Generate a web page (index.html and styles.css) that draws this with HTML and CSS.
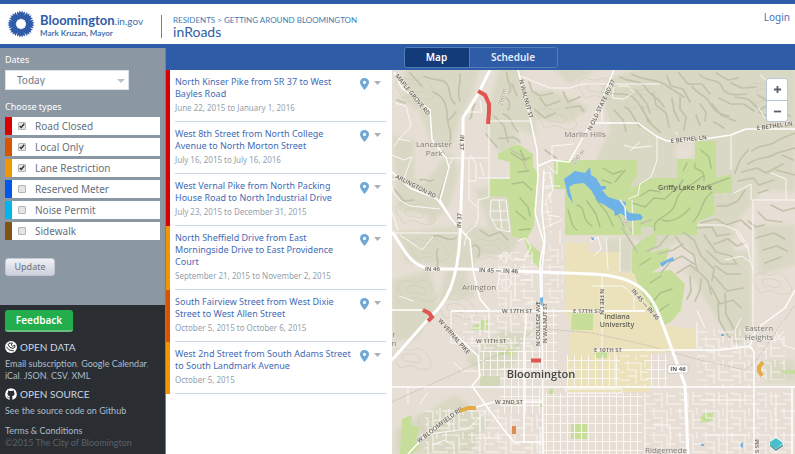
FILE: index.html
```html
<!DOCTYPE html>
<html lang="en">
<head>
<meta charset="utf-8">
<meta name="viewport" content="width=device-width, initial-scale=1">
<title>inRoads</title>
<link rel="stylesheet" href="styles.css">
</head>
<body>
<svg class="defs" aria-hidden="true">
  <symbol id="pin" viewBox="0 0 9 12"><path fill-rule="evenodd" d="M4.500 0C1.900 0 0 1.900 0 4.300C0 7.300 4.500 12 4.500 12S9 7.300 9 4.300C9 1.900 7.100 0 4.500 0ZM4.500 2.800A1.600 1.600 0 1 1 4.500 6A1.600 1.600 0 1 1 4.500 2.800Z"/></symbol>
</svg>
<header class="site-header">
  <a class="brand" href="#">
    <svg class="flower" viewBox="-14 -14 28 28" aria-hidden="true">
      <g id="arm"><path d="M0-4L-3-5.500L-4-9L-4.200-12.600L-2-11.300L-1.300-13.600L0-11.400L1.300-13.600L2-11.300L4.200-12.600L4-9L3-5.500Z"/></g>
      <use href="#arm" transform="rotate(45)"/><use href="#arm" transform="rotate(90)"/><use href="#arm" transform="rotate(135)"/><use href="#arm" transform="rotate(180)"/><use href="#arm" transform="rotate(225)"/><use href="#arm" transform="rotate(270)"/><use href="#arm" transform="rotate(315)"/>
      <path class="flower-core" d="M0-5.500L1.500-3.700L3.900-3.900L3.700-1.500L5.500 0L3.700 1.500L3.900 3.900L1.500 3.700L0 5.500L-1.500 3.700L-3.900 3.900L-3.700 1.500L-5.500 0L-3.700-1.500L-3.900-3.900L-1.500-3.700Z"/>
      <path class="flower-core" d="M3.600-8.600L6.200-14L4.400-14ZM8.600-3.600L14-6.200V-4.400ZM8.600 3.600L14 6.200V4.400ZM3.600 8.600L6.200 14H4.400ZM-3.600 8.600L-6.200 14H-4.400ZM-8.600 3.600L-14 6.200V4.400ZM-8.600-3.600L-14-6.200V-4.400ZM-3.600-8.600L-6.200-14H-4.400Z"/>
    </svg>
    <span class="brand-text"><span class="brand-name"><b>Bloomington</b>.in.gov</span><span class="mayor">Mark Kruzan, Mayor</span></span>
  </a>
  <div class="heading">
    <nav class="crumbs"><a href="#">RESIDENTS</a> &gt; <a href="#">GETTING AROUND BLOOMINGTON</a></nav>
    <h1>inRoads</h1>
  </div>
  <a class="login" href="#">Login</a>
</header>
<main class="app">
  <aside class="sidebar">
    <form class="filters">
      <label class="field-title" for="dates">Dates</label>
      <div class="select-wrap"><select id="dates"><option>Today</option><option>Tomorrow</option></select></div>
      <fieldset>
        <legend class="field-title">Choose types</legend>
        <label class="type closed"><input type="checkbox" checked>Road Closed</label>
        <label class="type local"><input type="checkbox" checked>Local Only</label>
        <label class="type lane"><input type="checkbox" checked>Lane Restriction</label>
        <label class="type meter"><input type="checkbox">Reserved Meter</label>
        <label class="type noise"><input type="checkbox">Noise Permit</label>
        <label class="type walk"><input type="checkbox">Sidewalk</label>
      </fieldset>
      <button class="update" type="submit">Update</button>
    </form>
    <footer class="side-footer">
      <button class="feedback" type="button">Feedback</button>
      <h2><svg viewBox="0 0 12 12" aria-hidden="true"><circle class="disc" cx="6" cy="6" r="6"/><path class="cut" d="M1 5.500L4 8.800L8.800 10M3 3.500L5 6.400L8 7.400L9.800 6.400V4L7.800 5.300L6.300 4L7.400 2.200L5 2Z"/></svg>OPEN DATA</h2>
      <p class="links"><a href="#">Email subscription</a>, <a href="#">Google Calendar</a>, <a href="#">iCal</a>, <a href="#">JSON</a>, <a href="#">CSV</a>, <a href="#">XML</a></p>
      <h2><svg viewBox="0 0 12 12" aria-hidden="true"><path class="disc" d="M6 .2a6 6 0 0 0-1.900 11.600c.3 0 .5-.1.500-.4V10C3 10.300 2.600 9.400 2.400 9c-.1-.3-.5-.7-.8-.9.5-.1 1 .3 1.300.8.500.7 1.200.6 1.800.3 0-.4.200-.7.400-.8C3.600 8.200 2.500 7.600 2.500 5.600c0-.7.200-1.200.6-1.600-.1-.4-.2-.9.100-1.600.6-.1 1.200.2 1.700.6a6 6 0 0 1 2.200 0c.5-.4 1.100-.7 1.700-.6.300.7.200 1.200.1 1.600.4.400.6.900.6 1.600 0 2-1.100 2.600-2.600 2.800.300.300.500.600.500 1.200v1.800c0 .3.200.4.500.4A6 6 0 0 0 6 .2Z"/></svg>OPEN SOURCE</h2>
      <p class="links"><a href="#">See the source code on Github</a></p>
      <p class="legal"><a href="#">Terms &amp; Conditions</a><br><small>©2015 The City of Bloomington</small></p>
    </footer>
  </aside>
  <section class="content">
    <div class="toolbar"><div class="tabs"><button class="tab active" type="button">Map</button><button class="tab" type="button">Schedule</button></div></div>
    <div class="panes">
      <ul class="events">
        <li class="event closed"><div class="row"><div class="info"><a href="#">North Kinser Pike from SR 37 to West Bayles Road</a><time>June 22, 2015 to January 1, 2016</time></div><svg class="pin"><use href="#pin"/></svg><button class="more" type="button" aria-label="More"></button></div></li>
        <li class="event closed"><div class="row"><div class="info"><a href="#">West 8th Street from North College Avenue to North Morton Street</a><time>July 16, 2015 to July 16, 2016</time></div><svg class="pin"><use href="#pin"/></svg><button class="more" type="button" aria-label="More"></button></div></li>
        <li class="event closed"><div class="row"><div class="info"><a href="#">West Vernal Pike from North Packing House Road to North Industrial Drive</a><time>July 23, 2015 to December 31, 2015</time></div><svg class="pin"><use href="#pin"/></svg><button class="more" type="button" aria-label="More"></button></div></li>
        <li class="event lane"><div class="row"><div class="info"><a href="#">North Sheffield Drive from East Morningside Drive to East Providence Court</a><time>September 21, 2015 to November 2, 2015</time></div><svg class="pin"><use href="#pin"/></svg><button class="more" type="button" aria-label="More"></button></div></li>
        <li class="event local"><div class="row"><div class="info"><a href="#">South Fairview Street from West Dixie Street to West Allen Street</a><time>October 5, 2015 to October 6, 2015</time></div><svg class="pin"><use href="#pin"/></svg><button class="more" type="button" aria-label="More"></button></div></li>
        <li class="event lane"><div class="row"><div class="info"><a href="#">West 2nd Street from South Adams Street to South Landmark Avenue</a><time>October 5, 2015</time></div><svg class="pin"><use href="#pin"/></svg><button class="more" type="button" aria-label="More"></button></div></li>
      </ul>
      <div class="map">
        <svg class="map-art" viewBox="392 70 403 384" preserveAspectRatio="xMidYMid slice" role="img" aria-label="Map of Bloomington">
          <defs>
            <pattern id="blocks" width="7" height="9" patternUnits="userSpaceOnUse"><path d="M0 .5H7M.5 0V9" stroke="#faf7f3" stroke-width="1" fill="none"/></pattern>
            <pattern id="wide" width="26" height="24" patternUnits="userSpaceOnUse"><path d="M0 3H17V12H26M4 0V10H12V24M17 12V20H26M21 0V7M4 16H12M0 20H6" stroke="#f8f4f0" stroke-width="1" fill="none"/></pattern>
            <filter id="soften" x="-10%" y="-10%" width="120%" height="120%"><feGaussianBlur stdDeviation="2"/></filter>
            <filter id="haze" x="-5%" y="-5%" width="110%" height="110%"><feGaussianBlur stdDeviation=".5"/></filter>
            <g id="contour" fill="none" stroke="#cccbb5" stroke-width=".7"><path d="M0 5C8 0 12 8 20 4S32 10 36 17S28 27 20 22S6 28 3 20S-5 12 0 5M7 10C12 8 20 8 24 12S25 19 18 17S8 19 7 10"/></g>
          </defs>
          <path fill="#e7dfd5" d="M392 70H795V454H392Z"/>
          <g fill="#d9d8c4" filter="url(#soften)">
            <path d="M405 68H480L472 95L460 118L450 150L432 145L420 112L402 100ZM392 135L414 140L415 180L438 190L430 215L398 210ZM418 192L450 150L459 170L450 205L430 225ZM500 68H520L536 130L522 165L498 152L486 130L492 95ZM475 190L515 180L530 225L512 245L490 230ZM552 68H600L570 84ZM600 82L640 68H795V192L762 190L732 228L750 250L752 330L738 345L716 318L690 275L652 250L630 235L592 168L610 130Z"/>
            <path d="M398 232L460 226L463 268L405 262ZM470 226L524 232L512 252L480 256L466 275L475 297L438 300L446 270ZM392 280L430 270L438 310L415 340H392ZM500 330L530 330L512 368L485 377L465 360ZM395 430L455 395L490 420L470 454H395ZM606 240L632 236V272H606ZM765 360H795V382H766ZM755 225H795V265L760 275ZM520 92L552 90L590 108L570 122L535 120Z"/>
          </g>
          <g fill="#e7dfd5" filter="url(#soften)"><path d="M516 126L540 140L548 154L530 157L518 148ZM680 240L662 250L655 262L680 272L700 262ZM730 238L752 232V250L735 252ZM671 300L690 282L697 322L670 320ZM592 70L612 76L600 90L592 90ZM675 144L694 142V158L676 160Z"/></g>
          <g fill="#c7de9b">
            <path d="M498 154L512 146L520 145L533 154V166L538 174L534 226L526 240L540 252V268L531 260L524 239L512 236L508 197L489 196V179H510V162L498 159ZM554 160H637V178H634L630 189L640 184L651 178H677V159H695V141H716V178L732 174V193H714L715 214L697 222V235H655L652 227H641V235H565V189H554Z"/>
            <path d="M645 238L655 233L657 243L651 253L670 247L665 263L651 273L671 270L685 284L681 310L671 322L662 326L650 305L632 291V248Z"/>
            <path d="M473 325L480 324L482 320H488V330H471ZM498 353L513 346V355H498ZM402 419L412 415L411 425L420 427L416 440L419 448L412 454H400ZM571 424H587V439H571ZM549 389H553V394H549ZM572 313H593V330H571ZM585 351H605V356H585ZM700 418L704 413H713V420L708 422H700ZM780 370L795 370V374L784 373ZM514 400H518V405H514ZM539 404H543V407H539Z"/>
          </g>
          <path fill="#d1d7b7" d="M480 376H500V386H480Z"/>
          <path fill="#ebe2bb" d="M565 243H590V252H620V273H634L640 290L662 325L696 329V348L650 354V392H567V377L571 330L565 308Z"/>
          <path fill="#c7de9b" d="M572 313H593V330H571ZM596 352H607V358H596Z"/>
          <g fill="none" stroke="#c2c2aa" stroke-width="1.700" stroke-linecap="round" stroke-linejoin="round" filter="url(#haze)">
            <path d="M507 72C505 80 514 86 509 93M502 96C510 98 511 104 508 110M503 114C513 117 510 124 518 132M494 116L504 126L508 142M499 138C508 140 513 133 520 142M486 134L497 147M512 84L517 96M511 150L522 156L526 169M424 76C434 82 445 77 448 86S449 99 455 104M433 92C441 95 447 102 447 115S453 130 450 142M460 74C461 87 456 91 460 101M449 120L456 112M443 151L449 166L445 180L438 200M410 73L422 86M420 180C424 177 430 184 433 180M475 104C470 110 474 114 470 119M529 82L532 91L540 96L553 93M540 98L546 106L560 101M563 92L568 102L580 97M566 108L580 106L584 112M535 110L545 118L555 113M545 150L556 158M397 100L405 103M395 190L404 201L414 200M434 236C443 233 445 243 456 238M438 249C434 254 440 260 437 266M480 230L489 236L500 232L508 240M472 246C478 243 482 250 478 257"/>
            <path d="M620 77C629 83 641 79 646 88S660 98 664 107M632 74C644 82 658 77 670 88L684 97M610 93C620 96 629 91 636 100S645 116 650 121M625 107C634 111 633 120 640 127M614 110L623 120L626 131M636 90L647 104L650 113M653 93L656 105L666 113L669 127M642 107L648 121L660 132M667 76L671 86L683 89L690 102M679 73L688 84L702 84L710 94M680 97L680 109L686 117L684 130M672 98L674 111L679 121M692 86C696 94 705 94 710 103S719 114 729 116M700 75C706 82 719 78 722 87S736 95 746 94M716 73L728 80L738 78M731 83L742 88L756 87M700 104L706 112L705 121M712 104L721 115L735 121M719 98L731 104L744 104L754 111M735 97L748 99L760 110L766 106M696 115L700 125M714 122L724 128M759 112L768 117L778 114M758 95L766 100M781 110L790 116"/>
            <path d="M752 151C760 143 770 148 778 140L795 133M748 164C758 156 767 160 777 153L795 148M742 172L757 168L766 173L783 164M738 181L753 178L759 185L774 180M748 150L740 160L735 173M782 155L793 160M776 170L795 175M745 190L738 201L727 206L717 206M758 193L768 190M701 223L716 219L726 225L741 220L751 229M697 228L712 227L717 236L730 234M714 244L728 239L737 246L744 243M704 235L716 252L731 256L737 264M683 232L694 240L701 256L714 269L712 281M676 237L684 248L694 255L697 270L708 281L711 294M707 251L721 264L735 264M715 266L727 274L740 274M714 276L727 291L743 288M711 287L720 304L733 300L741 308M725 293L726 314L734 329M718 303L719 320L728 336L737 342M699 272L690 265L677 273M694 264L682 256L670 262L661 273M683 244L673 250L658 254M668 235L659 246L647 251M690 276L691 291L687 299M701 279L700 290L695 301M651 220L640 224M622 228L631 242L637 252M771 205L783 211L795 208M758 212L766 220L782 222M756 238L774 233L785 239M763 250L777 246L787 251M765 263L781 257M748 221L756 227L764 225"/>
          </g>
          <g opacity=".8"><use href="#contour" x="398" y="75"/><use href="#contour" x="398" y="200"/><use href="#contour" x="412" y="236"/><use href="#contour" x="475" y="236"/><use href="#contour" x="440" y="295"/><use href="#contour" x="395" y="345"/><use href="#contour" x="420" y="410"/><use href="#contour" x="450" y="428"/><use href="#contour" x="540" y="105"/><use href="#contour" x="580" y="75"/><use href="#contour" x="400" y="277"/><use href="#contour" x="755" y="270"/><use href="#contour" x="695" y="180"/><use href="#contour" x="625" y="85"/><use href="#contour" x="750" y="80"/></g>
          <g fill="none" stroke="#a8bf87" stroke-width="1.400" stroke-linecap="round" filter="url(#haze)"><path d="M577 205C588 208 579 218 592 226M568 210C572 220 570 225 577 230M587 201L596 214L600 227M596 199L607 213L613 226M603 168L613 174L622 171M602 180L611 183M625 170L615 182M632 203L645 207L654 198L665 199L675 189M655 230C650 218 673 217 676 202S692 187 704 175M640 196L650 190L660 192M662 220C672 224 683 216 690 208M693 222C704 211 700 201 712 192M676 190L683 180M695 164C692 173 706 165 704 181M683 171L687 163M701 150L709 157L711 168M707 186L729 178M617 213L624 226M520 150L526 161M511 153L522 160L530 158M518 172L529 171M512 184L523 182L532 190M520 198L528 207L530 216M516 211L526 220M519 230L530 229M640 265L651 258M650 283L661 276M651 304L660 293L672 289M658 312L669 304"/></g>
          <g fill="url(#blocks)"><path d="M538 308H557V380H538ZM480 350H537V376H480ZM544 393H642V454H544ZM567 355H620V388H567ZM645 354H668V387H645ZM500 388H540V414H500ZM500 376H537V386H500Z"/></g>
          <g fill="url(#wide)"><path d="M463 315H536V350H463ZM498 252H535V308H498ZM697 329H753V388H697ZM645 392H795V454H645ZM500 415H545V454H500ZM425 410H500V454H425ZM758 336H785V380H758ZM542 178L552 172V235H542ZM545 245H563V300H545ZM620 355H648V388H620Z"/></g>
          <g class="minor">
            <path d="M392 155L404 160L412 157L404 178L392 180M395 103L406 106L411 126L400 138L394 146M398 139L410 141M392 233H458M392 212L398 230M446 158H488M448 168L453 158M392 185C392 195 400 202 411 206L440 209M469 158V200L477 207M489 123V197L478 200V216M464 112H482L480 100M470 155L476 164V181H470M480 163L484 176M478 178H510M518 75L550 88H570L582 84H660M488 121H530M479 215L476 225L467 233L464 246M491 200H506L510 232L497 229L490 216ZM499 200L502 229M491 211H508M492 220H509M543 174L550 172L553 190L546 200L548 215L560 217M545 186H560M546 227L562 220M574 144L552 146V158M557 160V174L548 166M614 87L612 98L624 99L631 94M618 86H628L634 93M602 105V123M657 135V160L651 177L640 184L638 195L628 199M624 145L634 148L652 146M630 151L640 142M678 135L675 132M731 135V170M734 193L751 184V200M751 200H795M697 225H724L738 231L747 245L753 270M771 173L786 179V199M758 107L765 118M760 75L775 88"/>
            <path d="M451 344L451 311H488M451 343H530M479 344V376M453 362L463 371H480M489 308V342M527 302H560M500 369H540M592 286H623L634 296V310M592 311H645M602 275V350M615 350V385M645 393V454M737 350L735 330L741 318M697 310L705 328M753 200V330M736 232L747 248M725 260L742 256L750 262M697 322V348M565 389H622V393H568L565 389M500 400H545M540 427V454M727 393V454M776 393V454M700 400H752M705 435H750M653 425H670V454M502 282C507 276 513 280 510 286S501 289 502 282M501 255C505 250 511 254 508 259S500 261 501 255M518 241L525 238L531 247L524 260L514 258M500 272L497 290M515 272V300M520 280H532M620 238V272M606 238L608 270M632 200L633 235M591 241L598 237L601 249L594 256"/>
            <path d="M400 235L422 250L433 237M399 296L413 301M408 404V386M420 404L428 392M420 435L468 429L490 407M440 408V428M449 409V430M480 412V440M475 438H502M432 445L445 440L454 446M560 230V244M785 320L776 333L784 345L795 349M764 340H776L784 331"/>
          </g>
          <path fill="none" stroke="#c5bdb2" stroke-width=".8" stroke-dasharray="3 1" d="M392 402L480 362L512 350L535 328L592 333L650 346L700 360L745 370L755 362L795 305"/>
          <g class="road">
            <path d="M394 72L402 88L430 110L432 140L446 158L449 167L440 200L452 220M392 172L410 188L437 199L452 220L470 240L473 270L480 299L489 310M518 70L529 113L537 150L538 176L535 213L544 243L540 262L541 314M538 166L552 160L569 162L576 150L589 126L600 104L614 70M544 170L542 210L545 240L542 270L543 454M592 123H638L656 136L667 141H691L731 135L746 129H795M451 330L478 356L480 376L472 386L504 430L514 442H543M458 411L480 406L494 402H543M408 454L424 437L458 411M526 310V323L524 344V443M392 310H422M451 311H543M543 311H645M392 387H795M595 350H720L750 346L754 352V454M750 346L756 329L785 308L795 290M792 386V454"/>
          </g>
          <g class="highway">
            <path d="M490 70L478 94L463 118V150L460 235C458 280 447 303 430 317L392 360M392 232C405 250 409 265 430 269H463L592 274C637 276 651 292 660 317L685 385L688 454"/>
          </g>
          <g fill="#6eb2e7">
            <path d="M564 179L575 171L585 173L590 167L591 175L596 178L601 186H606V189L602 190L608 197L621 201L626 202L625 209L629 213L640 214L643 217L641 220L628 221L621 213L615 216L614 211L603 204L598 202L591 190L584 183L574 184L569 187L573 203L568 196Z"/>
            <path d="M660 263L673 257L674 261L668 262L662 267ZM540 298L543 297V307L540 304ZM741 444L743 442V448L740 446ZM701 444H704V446H701ZM721 334H724V336H721ZM591 237L594 238V240H592Z"/>
          </g>
          <path fill="none" stroke="#f4f4e8" stroke-width="1.500" d="M620 200L625 207L626 222"/>
          <g class="street">
            <text transform="translate(395 76) rotate(51)">MAPLE GROVE RD</text><text transform="translate(395 178) rotate(27)">ARLINGTON RD</text>
            <text transform="translate(460 135) rotate(91)">IN 37</text><text transform="translate(461 228) rotate(-88)">IN 37</text>
            <text transform="translate(519 80) rotate(75)">N WALNUT ST</text><text transform="translate(591 131) rotate(-64)">N OLD STATE RD 37</text>
            <text transform="translate(671 143) rotate(-6)">E BETHEL LN</text><text transform="translate(757 130) rotate(-7)">E BETHEL LN</text>
            <text x="425" y="271">IN 46</text><text transform="translate(479 272) rotate(2)">IN 45 — IN 46</text>
            <text transform="translate(438 321) rotate(49)">W VERNAL PIKE</text><text x="502" y="313">W 17TH ST</text><text x="573" y="313">E 17TH ST</text><text x="476" y="343">W 11TH ST</text>
            <text transform="translate(540 346) rotate(-90)">N COLLEGE AVE</text><text transform="translate(547 343) rotate(-90)">N WALNUT ST</text>
            <text transform="translate(600 289) rotate(90)">N FEE LN</text><text transform="translate(631 291) rotate(49)">IN 45 — IN 46</text>
            <text x="594" y="352">E 10TH ST</text><text x="495" y="404">W 2ND ST</text><text transform="translate(419 443) rotate(-37)">W BLOOMFIELD RD</text><text transform="translate(759 453) rotate(-90)">S SM</text>
            <g class="contour-label"><text transform="translate(502 106) rotate(-75)">200 m</text><text transform="translate(574 165) rotate(-49)">200 m</text><text transform="translate(620 218) rotate(55)">200 m</text></g>
          </g>
          <path d="M668 365H688V373H668Z" fill="#fff" stroke="#bbb8af" stroke-width=".6"/><text class="shield" x="678" y="371">IN 46</text>
          <g class="place"><text x="434" y="147">Lancaster</text><text x="434" y="156">Park</text><text x="585" y="137">Marlin Hills</text><text x="685" y="190" class="park">Griffy Lake Park</text><text x="479" y="290">Arlington</text><text x="617" y="319" class="park">Indiana</text><text x="617" y="327" class="park">University</text><text x="759" y="331">Eastern</text><text x="759" y="340">Heights</text><text x="666" y="453">Ridgemede</text><text x="394" y="337">r</text><text x="394" y="346">n</text></g>
          <text class="city" x="541" y="378">Bloomington</text>
          <g fill="none" stroke-width="4"><path stroke="#df5651" d="M478 91L485 95L489 104V112L488 124M423 310L429 313L432 317L428 321M531 360.500H541"/><path stroke="#e4ab48" d="M460 411L468 408L476 408M763 362L759 367V371L762 376"/><path stroke="#e28b51" d="M514 426V434"/></g>
          <path fill="#fff" opacity=".8" d="M776 436L784 443V445L776 452L769 445V443Z"/><path fill="#52979d" d="M770 444L776 449L783 444V446L776 451L770 446Z"/><path fill="#47bfcc" d="M776 438L783 443L776 449L770 444V442Z"/>
        </svg>
        <div class="zoom"><button type="button" aria-label="Zoom in"><svg viewBox="0 0 10 10"><path d="M5 1V9M1 5H9"/></svg></button><button type="button" aria-label="Zoom out"><svg viewBox="0 0 10 10"><path d="M1 5H9"/></svg></button></div>
      </div>
    </div>
  </section>
</main>
</body>
</html>
```
FILE: styles.css
```css
* { box-sizing: border-box; }
body {
  margin: 0;
  min-height: 100vh;
  display: flex;
  flex-direction: column;
  font-family: "Noto Sans", sans-serif;
  font-size: 9px;
  line-height: 12px;
  color: #2f5ca7;
  background: #fff;
}
a { color: inherit; text-decoration: none; }
h1, h2, p, ul { margin: 0; padding: 0; }
button, select, input { font: inherit; }
.defs { position: absolute; width: 0; height: 0; }

.site-header {
  display: flex;
  align-items: flex-start;
  border-top: 4px solid #2f5ca7;
  min-height: 44px;
  padding: 6px 5px 0 7px;
  font-family: Lato, sans-serif;
}
.brand { display: flex; gap: 5px; }
.flower { width: 28px; height: 28px; fill: #2f5ca7; }
.flower-core { fill: #fff; }
.brand-text { display: flex; flex-direction: column; padding-top: 3px; }
.brand-name { font-size: 10px; line-height: 15px; color: #3b6fab; }
.brand-name b { font-size: 13px; color: #2f5ca7; }
.mayor { font-size: 8px; line-height: 9px; font-weight: 700; color: #3f75ae; }
.heading {
  margin: 5px 0 0 18px;
  padding-left: 11px;
  border-left: 1px solid #6580b5;
}
.crumbs { font-size: 8px; line-height: 10px; color: #447bb0; }
h1 { font-size: 14px; line-height: 13px; font-weight: 400; }
.login { margin-left: auto; font-family: "Noto Sans", sans-serif; font-size: 10px; line-height: 14px; color: #4775b8; }

.app { flex: 1; display: flex; background: #2f5ca7; }
.sidebar { width: 166px; flex: none; margin-top: 4px; display: flex; flex-direction: column; background: #2a2e33; border-right: 1px solid #74808c; }
.filters { padding: 5px 5px 29px; background: #8b97a3; color: #fff; }
.field-title { display: block; line-height: 14px; padding: 0; }
.select-wrap { position: relative; width: 124px; margin: 3px 0 10px; }
.select-wrap::after { content: ""; position: absolute; right: 4px; top: 9px; border: 4px solid transparent; border-top-color: #b5c5d3; border-bottom: 0; }
select { appearance: none; display: block; width: 100%; height: 20px; padding: 0 11px; border: 1px solid #dce1e7; border-radius: 0; background: #fff; color: #697889; font-size: 10px; }
fieldset { border: 0; margin: 0; padding: 0; min-width: 0; }
legend { margin-bottom: 3px; }
.type { display: flex; align-items: center; height: 18px; margin-bottom: 3px; padding-left: 6px; background: #fff; border-left: 7px solid; font-size: 10px; color: #65717d; }
.type input { appearance: none; flex: none; width: 8px; height: 8px; margin: 0 9px 0 0; border: 1px solid #b5b5b5; border-radius: 1px; background: #e4e4e4; }
.type input:checked { background: #e4e4e4 url("data:image/svg+xml,%3Csvg xmlns='http://www.w3.org/2000/svg' viewBox='0 0 8 8'%3E%3Cpath d='M1 4L3 6L7 1' fill='none' stroke='%23333' stroke-width='2'/%3E%3C/svg%3E"); }
.closed { border-color: #da0000; }
.local { border-color: #d85400; }
.lane { border-color: #ee9700; }
.meter { border-color: #0057e8; }
.noise { border-color: #00b4ec; }
.walk { border-color: #805416; }
.update { display: block; width: 50px; height: 18px; margin-top: 15px; padding: 0; border: 1px solid #c3c9d2; border-radius: 3px; background: linear-gradient(#f0f1f6, #ccd0da); color: #697079; }

.side-footer { flex: 1; padding: 5px; color: #59616b; font-family: Lato, sans-serif; }
.feedback { display: block; width: 68px; height: 22px; margin-bottom: 8px; padding: 0; border: 0; border-bottom: 2px solid #69bd7d; border-radius: 3px; background: #22ae4c; color: #fff; font-family: "Noto Sans", sans-serif; font-size: 10px; font-weight: 600; }
h2 { display: flex; align-items: center; gap: 3px; font-size: 10px; line-height: 14px; font-weight: 400; color: #cbd6e3; }
h2 svg { width: 12px; height: 12px; }
.disc { fill: #fff; }
.cut { fill: none; stroke: #2a2e33; stroke-width: 1; }
.side-footer a { color: #adbccc; }
.links { padding: 4px 0 5px; }
.side-footer .legal { padding-top: 3px; }
small { font-size: 9px; }

.content { flex: 1; min-width: 0; display: flex; flex-direction: column; }
.toolbar { height: 26px; display: flex; align-items: center; justify-content: center; }
.tabs { display: flex; height: 21px; border: 1px solid #527eb9; border-radius: 3px; overflow: hidden; }
.tab { width: 64px; padding: 0; border: 0; background: #2f5ca7; color: #e5edf8; font-size: 10px; font-weight: 600; }
.tab + .tab { width: 88px; border-left: 1px solid #527eb9; }
.tab.active { background: #143b79; color: #fff; }
.panes { flex: 1; display: flex; background: #fff; }
.events { width: 226px; flex: none; list-style: none; }
.event { border-left-width: 4px; border-left-style: solid; padding: 0 6px 0 5px; }
.row { display: flex; align-items: flex-start; padding: 6px 5px 7px 0; border-bottom: 1px solid #cad7e7; }
.info { flex: 1; min-width: 0; padding-right: 4px; }
.info a { display: block; color: #3f6bb5; }
time { display: block; margin-top: 2px; font-size: 8px; color: #949fad; }
.pin { width: 9px; height: 12px; margin-top: 2px; fill: #72a8d5; }
.more { width: 7px; height: 4px; margin: 5px 0 0 5px; padding: 0; border: 0; background: #aab0b7; clip-path: polygon(0 0, 100% 0, 50% 100%); }

.map { position: relative; flex: 1; min-width: 0; overflow: hidden; }
.map-art { position: absolute; inset: 0; width: 100%; height: 100%; font-family: "Open Sans", sans-serif; }
.minor, .road, .highway { fill: none; stroke: #faf8f5; stroke-width: 1; stroke-linejoin: round; }
.road { stroke: #fff; stroke-width: 1.500; }
.highway { stroke: #fff; stroke-width: 3; }
.street { font-size: 6px; font-weight: 600; fill: #686660; stroke: #eee9df; stroke-width: 1; paint-order: stroke; }
.contour-label { font-weight: 400; fill: #96937f; }
.place { font-size: 8px; fill: #807e7a; text-anchor: middle; stroke: #e9e3d9; stroke-width: 1; paint-order: stroke; }
.park { font-size: 7px; font-weight: 600; fill: #626158; stroke: none; }
.shield { font-size: 6px; font-weight: 700; fill: #555; text-anchor: middle; }
.city { font-size: 11px; font-weight: 600; fill: #444; stroke: #eee9df; stroke-width: 1; paint-order: stroke; text-anchor: middle; }
.zoom { position: absolute; top: 8px; right: 7px; width: 22px; border: 1px solid #b9c8d1; border-radius: 3px; background: #fff; }
.zoom button { display: grid; place-items: center; width: 100%; height: 21px; padding: 0; border: 0; background: none; }
.zoom button + button { border-top: 1px solid #b9c8d1; }
.zoom svg { width: 9px; height: 9px; fill: none; stroke: #59616c; stroke-width: 2; }
```
